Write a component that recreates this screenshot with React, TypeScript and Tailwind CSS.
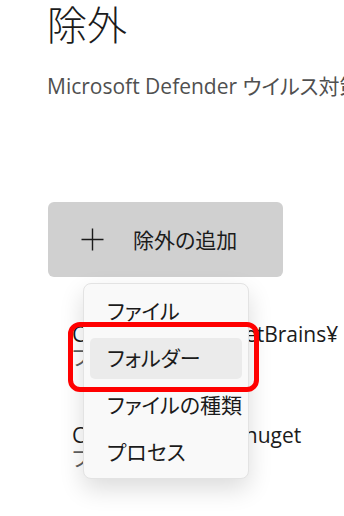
import React from 'react';

const menuItems = ['ファイル', 'フォルダー', 'ファイルの種類', 'プロセス'];

const exclusions = [
  { path: 'C:¥Users¥kaoru¥JetBrains¥', kind: 'フォルダー' },
  { path: 'C:¥Users¥kaoru¥.nuget', kind: 'フォルダー' },
];

export default function App() {
  return (
    <div
      className="relative w-[344px] h-[516px] overflow-hidden bg-white text-[#1b1b1b] [font-feature-settings:'palt']"
      style={{ fontFamily: '"Open Sans", "Noto Sans CJK JP", sans-serif' }}
    >
      {/* Header */}
      <div className="pl-[47px]">
        <h1 className="pt-[2px] text-[40px] leading-[46px] font-light whitespace-nowrap">除外</h1>
        <p className="mt-[24px] text-[21px] leading-[28px] text-[#505050] whitespace-nowrap">
          Microsoft Defender ウイルス対策から除外する項目を追加または削除します。
        </p>
      </div>

      {/* Add exclusion button */}
      <div className="pl-[48px] mt-[102px]">
        <button className="flex items-center w-[235px] h-[75px] rounded-[6px] bg-[#d0d0d0] pl-[33px]">
          <svg width="23" height="23" viewBox="0 0 23 23" fill="none" stroke="#1b1b1b" strokeWidth="1.4">
            <path d="M11.5 0.5v22M0.5 11.5h22" />
          </svg>
          <span className="ml-[29px] text-[21px] leading-[28px]">除外の追加</span>
        </button>
      </div>

      {/* Exclusion list */}
      <div className="pl-[72px] mt-[46px] flex flex-col gap-[55px]">
        {exclusions.map((item) => (
          <div key={item.path} className="whitespace-nowrap">
            <div className="text-[21px] leading-[23px]">{item.path}</div>
            <div className="text-[21px] leading-[23px] text-[#5f5f5f]">{item.kind}</div>
          </div>
        ))}
      </div>

      {/* Dropdown menu */}
      <div className="absolute left-[83px] top-[283px] w-[166px] h-[196px] rounded-[8px] border border-[#e3e3e3] bg-[#f9f9f9] shadow-[0_10px_24px_rgba(0,0,0,0.14)] px-[6px] pt-[7px]">
        {menuItems.map((label) => (
          <div
            key={label}
            className={
              'h-[41px] mb-[6px] rounded-[5px] pl-[17px] flex items-center text-[21px] ' +
              (label === 'フォルダー' ? 'bg-[#ebebeb]' : '')
            }
          >
            {label}
          </div>
        ))}
      </div>

      {/* Highlight */}
      <div className="absolute left-[68px] top-[322px] w-[191px] h-[70px] rounded-[12px] border-[5px] border-[#ff0000]" />
    </div>
  );
}
